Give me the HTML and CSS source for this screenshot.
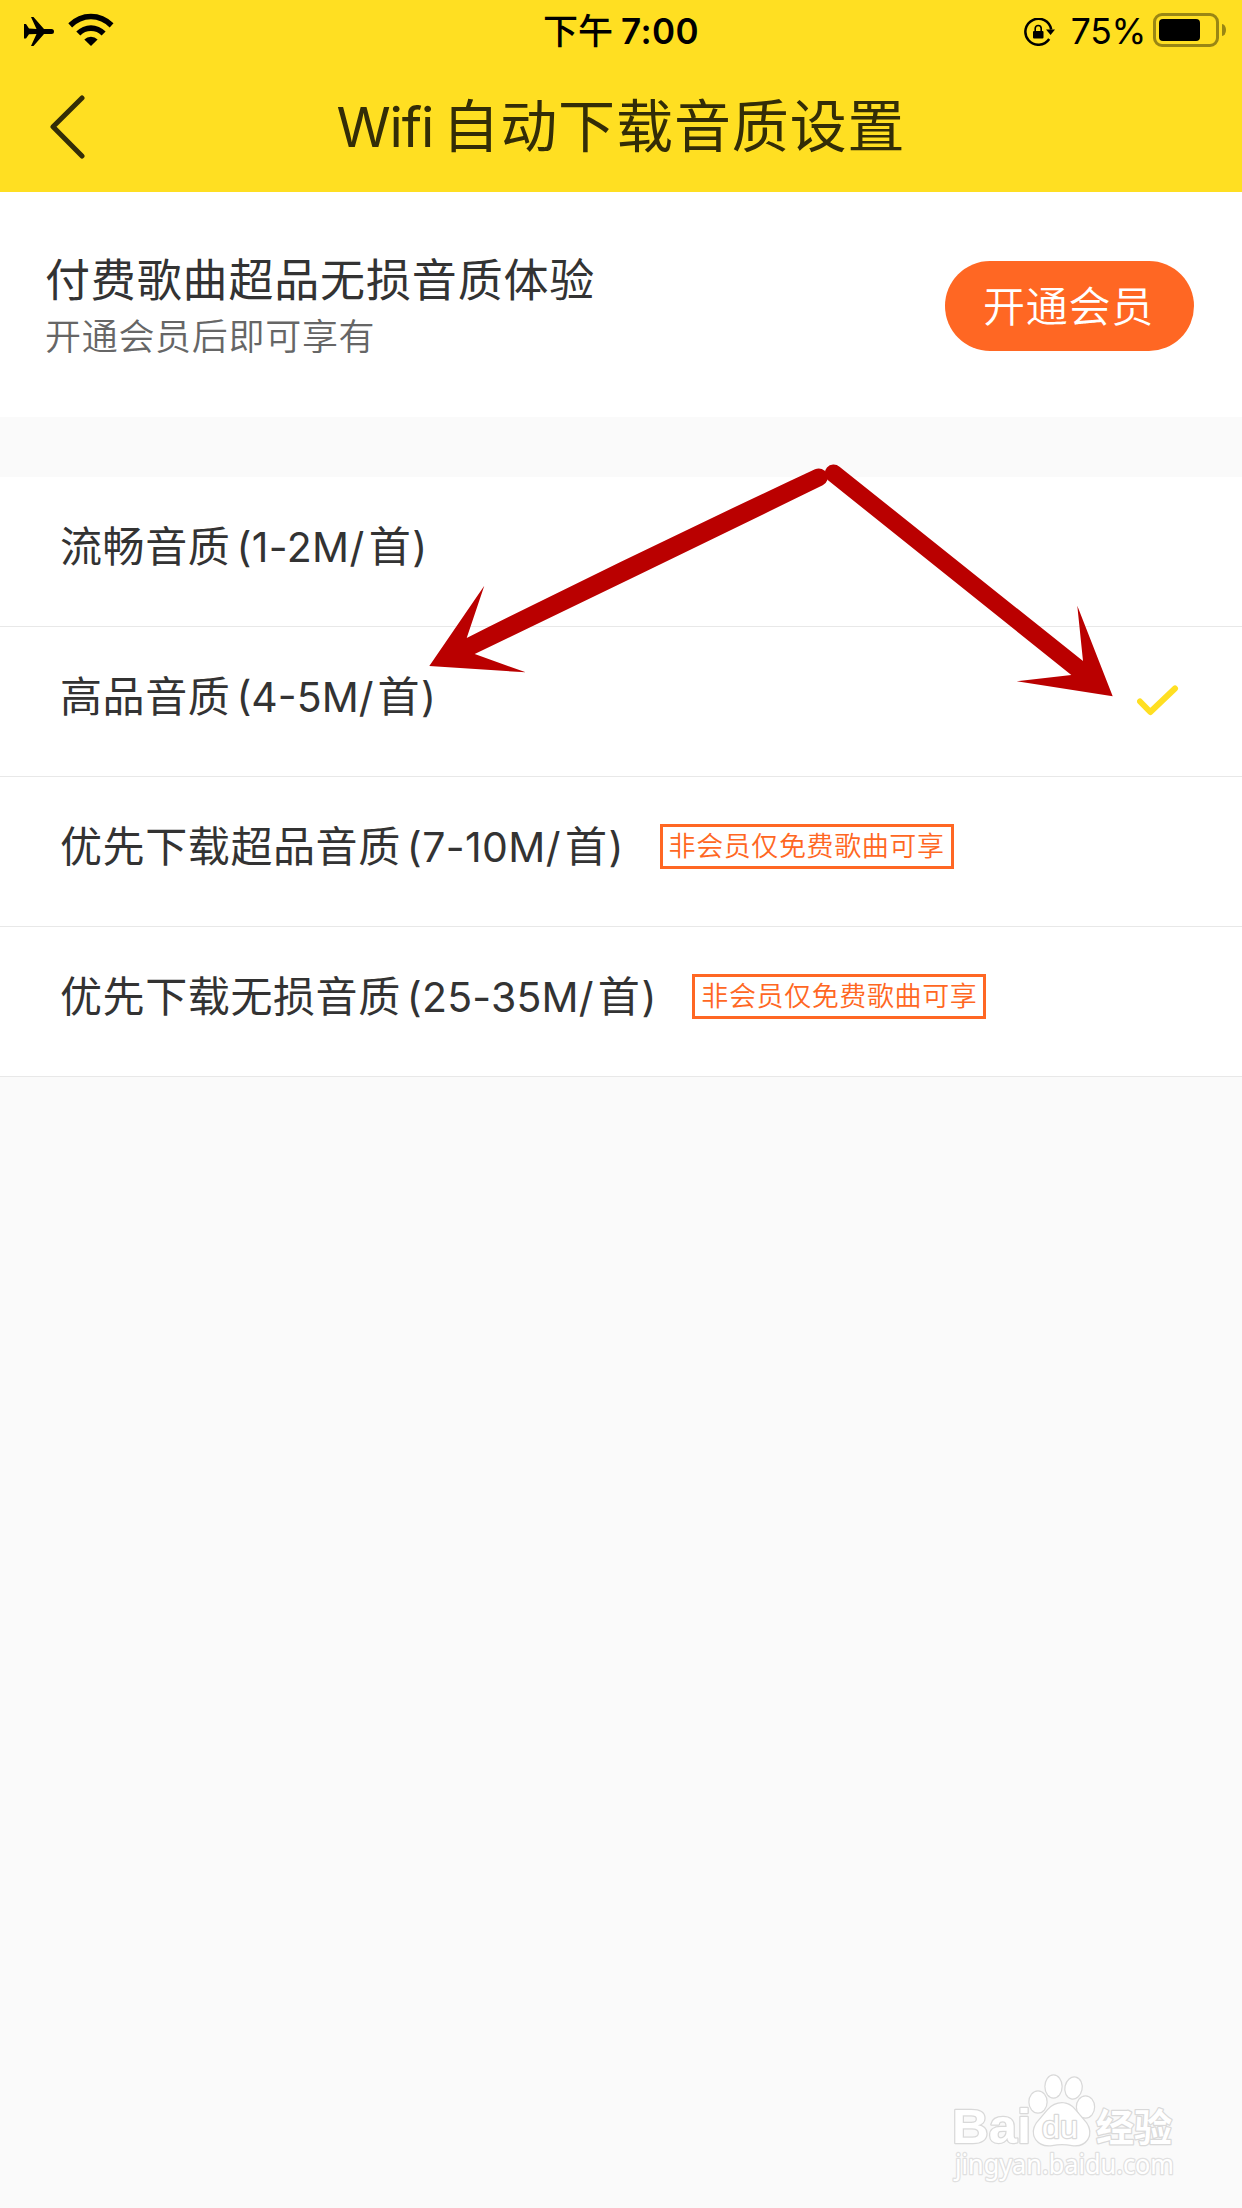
FILE: index.html
```html
<!DOCTYPE html>
<html lang="zh-CN">
<head>
<meta charset="utf-8">
<title>Wifi自动下载音质设置</title>
<link rel="stylesheet" href="styles.css">
</head>
<body>
<header class="header">
  <div class="status">
    <div class="status-left">
      <svg class="plane" width="31" height="29" viewBox="0 0 31 29"><path d="M0 7h2l3 4.600L12.500 12 7 0h2.500L20 12h7.500a2.500 2.500 0 0 1 0 5H20L9.500 29H7l5.500-12L5 17.200 2 21.500H0Z"/></svg>
      <svg class="wifi" width="46" height="33" viewBox="0 0 46 33"><path d="M0.300 10.200a31.500 31.500 0 0 1 45.200 0l-3.800 4.200a26 26 0 0 0-37.600 0Z"/><path d="M8.300 18.500a20.300 20.300 0 0 1 29.300 0l-4 4a15 15 0 0 0-21.300 0Z"/><path d="M16.300 26.400a9.700 9.700 0 0 1 13.300 0L23 33Z"/></svg>
    </div>
    <div class="clock"><span class="clock-cjk">下午</span><span class="clock-num">7:00</span></div>
    <div class="status-right">
      <svg class="lock" width="31" height="28" viewBox="0 0 31 28"><path class="ring" d="M27.200 11.500A13 13 0 1 0 25.200 21"/><path d="M22 11.400h9L26.600 17Z"/><rect x="9" y="13" width="10.500" height="7.500" rx="1"/><path class="shackle" d="M11.200 13.500v-3a3 3 0 0 1 6 0v3"/></svg>
      <span class="percent">75%</span>
      <div class="battery"><div class="cell"><div class="charge"></div></div><div class="nub"></div></div>
    </div>
  </div>
  <nav class="nav">
    <svg class="back" width="35" height="64" viewBox="0 0 35 64"><path d="M32 3 3 31.800 32 61"/></svg>
    <h1 class="title"><span class="title-latin">Wifi</span>自动下载音质设置</h1>
  </nav>
</header>
<section class="promo">
  <div>
    <div class="promo-title">付费歌曲超品无损音质体验</div>
    <div class="promo-sub">开通会员后即可享有</div>
  </div>
  <button class="vip">开通会员</button>
</section>
<ul class="list">
  <li class="row"><span>流畅音质<span class="size">(1-2M/</span>首<span class="close">)</span></span></li>
  <li class="row"><span>高品音质<span class="size size-tight">(4-5M/</span>首<span class="close">)</span></span>
    <svg class="check" width="42" height="31" viewBox="0 0 42 31"><path d="M3 16.500 13.300 27 38 3.500"/></svg></li>
  <li class="row"><span>优先下载超品音质<span class="size">(7-10M/</span>首<span class="close">)</span></span><span class="tag">非会员仅免费歌曲可享</span></li>
  <li class="row"><span>优先下载无损音质<span class="size size-long">(25-35M/</span>首<span class="close">)</span></span><span class="tag">非会员仅免费歌曲可享</span></li>
</ul>
<svg class="arrows" width="700" height="220" viewBox="420 460 700 220">
  <path d="M429.300 666 484.300 585.700 466.700 638Q640 551 815 469.300A8.800 8.800 0 0 1 822.700 485.300Q647 571 474.700 654L525.700 672.300Z"/>
  <path d="M1112.700 696.300 1077.300 605.700 1083 661 839.500 466.700A8.800 8.800 0 0 0 827.700 480L1071.300 675 1016.700 681.300Z"/>
</svg>
<svg class="watermark" width="240" height="138" viewBox="950 2070 240 138">
  <g class="wm">
    <text class="wm-bold" x="952" y="2143" font-size="49" textLength="79" lengthAdjust="spacingAndGlyphs">Bai</text>
    <ellipse cx="1038" cy="2102" rx="8.500" ry="10.500"/><ellipse cx="1053.500" cy="2086.500" rx="8" ry="11"/><ellipse cx="1073.500" cy="2088" rx="8" ry="10.500" transform="rotate(12 1073.500 2088)"/><ellipse cx="1085.500" cy="2107" rx="8.500" ry="10.500"/>
    <path d="M1048 2110c8-9 20-9 27 0l11 13c8 12 0 24-14 22q-10-2-20 0c-14 2-23-10-15-22Z"/>
    <text class="wm-du" x="1042" y="2138" font-size="31" textLength="36" lengthAdjust="spacingAndGlyphs">du</text>
    <text class="wm-cjk" x="1096" y="2141" font-size="38" textLength="76" lengthAdjust="spacingAndGlyphs">经验</text>
    <text class="wm-url" x="955" y="2173.500" font-size="27" textLength="219" lengthAdjust="spacingAndGlyphs">jingyan.baidu.com</text>
  </g>
</svg>
</body>
</html>
```
FILE: styles.css
```css
* { box-sizing: border-box; }
body {
  position: relative;
  margin: 0;
  width: 1242px;
  height: 2208px;
  background: #fafafa;
  color: #333;
  font-family: Inter, "Noto Sans CJK SC", sans-serif;
  overflow: hidden;
}
svg { display: block; flex: none; }
.header { height: 192px; background: #ffdf22; }
.status {
  display: grid;
  grid-template-columns: 1fr auto 1fr;
  height: 60px;
  padding: 0 16px 0 24px;
  color: #000;
}
.status-left { display: flex; align-items: flex-start; gap: 13px; }
.plane { margin-top: 17px; }
.wifi { margin-top: 13px; }
.clock { display: flex; align-items: baseline; gap: 8px; font-size: 35px; line-height: 63px; margin-right: 8px; }
.clock-cjk { font-weight: 500; }
.clock-num { font-weight: 600; letter-spacing: 0.4px; }
.status-right { display: flex; align-items: flex-start; justify-content: flex-end; }
.lock { margin: 18px 16px 0 0; }
.lock .ring { fill: none; stroke: #000; stroke-width: 2.5; }
.lock .shackle { fill: none; stroke: #000; stroke-width: 1.600; }
.percent { font-size: 35.500px; line-height: 63px; margin-right: 7px; letter-spacing: -0.3px; }
.battery { display: flex; align-items: center; gap: 3px; margin-top: 13px; height: 34px; }
.cell { width: 66px; height: 34px; padding: 3px; border: 3px solid #998614; border-radius: 9px; }
.charge { width: 41px; height: 22px; border-radius: 4px; background: #000; }
.nub { width: 4px; height: 12px; border-radius: 0 4px 4px 0 / 0 6px 6px 0; background: #998614; }
.nav {
  display: grid;
  grid-template-columns: 35px 1fr 35px;
  align-items: center;
  height: 132px;
  padding: 2px 50px 0;
}
.back path { fill: none; stroke: #332d07; stroke-width: 5; stroke-linecap: round; stroke-linejoin: round; }
.title {
  margin: 0;
  color: #332d07;
  font-size: 57px;
  font-weight: 400;
  line-height: 80px;
  letter-spacing: 0.9px;
  text-align: center;
  white-space: nowrap;
}
.title-latin { font-size: 55px; margin-right: 9px; letter-spacing: -1.1px; }
.promo {
  display: flex;
  justify-content: space-between;
  align-items: flex-start;
  height: 225px;
  padding: 61px 48px 0 45px;
  background: #fff;
}
.promo-title { font-size: 45px; line-height: 55px; letter-spacing: 0.85px; }
.promo-sub { margin-top: 7px; color: #666; font-size: 36px; line-height: 44px; letter-spacing: 0.7px; font-weight: 350; }
.vip {
  width: 249px;
  height: 90px;
  margin-top: 8px;
  padding: 0 2px 0 0;
  border: 0;
  border-radius: 45px;
  background: #ff6723;
  color: #fff;
  font-family: inherit;
  font-size: 42px;
  font-weight: 350;
  line-height: 92px;
  letter-spacing: 0.7px;
}
.list { margin: 60px 0 0; padding: 0; list-style: none; background: #fff; }
.row {
  display: flex;
  align-items: center;
  height: 150px;
  padding: 0 63px 10px 60px;
  border-bottom: 1px solid #e8e8e8;
  font-size: 42px;
  line-height: 60px;
  letter-spacing: 0.6px;
  white-space: nowrap;
}
.size { font-size: 41px; margin-left: 6px; margin-right: 4px; letter-spacing: 0.4px; }
.size-tight { letter-spacing: 0; }
.size-long { letter-spacing: 0.2px; }
.close { font-size: 41px; margin-left: 1px; letter-spacing: 0; }
.check { margin: 7px 0 0 auto; }
.check path { fill: none; stroke: #ffdf22; stroke-width: 6; stroke-linecap: round; stroke-linejoin: round; }
.tag {
  width: 294px;
  height: 45px;
  margin: 0 0 0 36px;
  border: 3px solid #ff6723;
  color: #ff6723;
  font-size: 27px;
  font-weight: 350;
  line-height: 40px;
  letter-spacing: 0.6px;
  text-align: center;
}
.arrows { position: absolute; left: 420px; top: 460px; overflow: visible; fill: #ba0000; }
.watermark { position: absolute; left: 950px; top: 2070px; }
.wm { fill: #fff; stroke: #d9d9d9; stroke-width: 2.5; stroke-linejoin: round; paint-order: stroke; }
.wm-bold { font-family: "Liberation Sans", sans-serif; font-weight: 700; }
.wm-du { font-family: "Liberation Sans", sans-serif; font-weight: 400; }
.wm-cjk { font-family: "Noto Sans CJK SC", sans-serif; font-weight: 700; }
.wm-url { font-family: "Noto Sans", sans-serif; stroke: #e0e0e0; }
```
